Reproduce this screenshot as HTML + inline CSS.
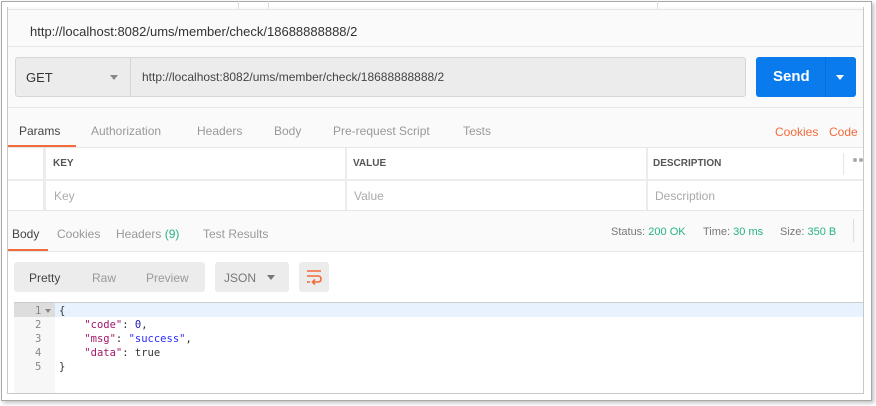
<!DOCTYPE html>
<html><head><meta charset="utf-8"><style>
*{margin:0;padding:0;box-sizing:border-box}
body{width:876px;height:406px;background:#fff;font-family:"Liberation Sans",sans-serif;position:relative;overflow:hidden}
.a{position:absolute}
.outer{left:1px;top:1px;width:871px;height:400px;border:1px solid #a8a8a8;box-shadow:2px 2px 4px rgba(0,0,0,.25);background:#fff}
.inner{left:7px;top:7px;width:857px;height:387px;border:1px solid #c8c8c8;border-top:none;background:#fafafa}
.t{font-size:13px;color:#333}
</style></head><body>
<div class="a outer"></div>
<div class="a inner"></div>
<div class="a" style="left:8px;top:1px;width:855px;height:9px;border-bottom:1px solid #e4e4e4"></div>
<div class="a" style="left:238px;top:1px;width:1px;height:9px;background:#ddd"></div>
<div class="a" style="left:268px;top:1px;width:1px;height:9px;background:#ddd"></div>
<div class="a" style="left:657px;top:1px;width:1px;height:9px;background:#ddd"></div>
<div class="a t" style="left:30px;top:24px;font-size:13px;color:#333">http://localhost:8082/ums/member/check/18688888888/2</div>
<div class="a" style="left:8px;top:46px;width:855px;height:1px;background:#e6e6e6"></div>
<div class="a" style="left:15px;top:57px;width:731px;height:40px;background:#ececec;border:1px solid #d6d6d6;border-radius:3px"></div>
<div class="a" style="left:130px;top:58px;width:1px;height:38px;background:#d6d6d6"></div>
<div class="a t" style="left:26px;top:70px">GET</div>
<div class="a" style="left:110px;top:75px;border:4px solid transparent;border-top:5px solid #888"></div>
<div class="a t" style="left:142px;top:70px;font-size:12px;color:#444">http://localhost:8082/ums/member/check/18688888888/2</div>
<div class="a" style="left:756px;top:57px;width:100px;height:40px;background:#097bed;border-radius:3px"></div>
<div class="a" style="left:825px;top:57px;width:1px;height:40px;background:#0a6fd4"></div>
<div class="a" style="left:773px;top:68px;color:#fff;font-weight:bold;font-size:15px">Send</div>
<div class="a" style="left:836px;top:75px;border:4px solid transparent;border-top:5px solid #fff"></div>
<div class="a" style="left:8px;top:107px;width:855px;height:1px;background:#e6e6e6"></div>
<div class="a t" style="left:19px;top:124px;font-size:12px;color:#444">Params</div>
<div class="a" style="left:91px;top:124px;font-size:12px;color:#999">Authorization</div>
<div class="a" style="left:197px;top:124px;font-size:12px;color:#999">Headers</div>
<div class="a" style="left:274px;top:124px;font-size:12px;color:#999">Body</div>
<div class="a" style="left:333px;top:124px;font-size:12px;color:#999">Pre-request Script</div>
<div class="a" style="left:463px;top:124px;font-size:12px;color:#999">Tests</div>
<div class="a" style="left:775px;top:125px;font-size:12px;color:#f26b3a">Cookies</div>
<div class="a" style="left:829px;top:125px;font-size:12px;color:#f26b3a">Code</div>
<div class="a" style="left:8px;top:145px;width:68px;height:2px;background:#f26b3a"></div>
<div class="a" style="left:8px;top:147px;width:855px;height:64px;background:#fff;border-top:1px solid #e6e6e6;border-bottom:1px solid #e6e6e6"></div>
<div class="a" style="left:8px;top:179px;width:855px;height:2px;background:#ececec"></div>
<div class="a" style="left:43px;top:148px;width:3px;height:62px;background:#ececec"></div>
<div class="a" style="left:345px;top:148px;width:2px;height:62px;background:#ececec"></div>
<div class="a" style="left:646px;top:148px;width:2px;height:62px;background:#ececec"></div>
<div class="a" style="left:843px;top:153px;width:1px;height:22px;background:#e6e6e6"></div>
<div class="a" style="left:53px;top:158px;font-size:10px;font-weight:bold;color:#555">KEY</div>
<div class="a" style="left:353px;top:158px;font-size:10px;font-weight:bold;color:#555">VALUE</div>
<div class="a" style="left:653px;top:158px;font-size:10px;font-weight:bold;color:#555">DESCRIPTION</div>
<div class="a" style="left:853px;top:158px;width:4px;height:4px;border-radius:2px;background:#aaa"></div>
<div class="a" style="left:859px;top:158px;width:4px;height:4px;border-radius:2px;background:#aaa"></div>
<div class="a" style="left:54px;top:189px;font-size:12px;color:#aaa">Key</div>
<div class="a" style="left:354px;top:189px;font-size:12px;color:#aaa">Value</div>
<div class="a" style="left:655px;top:189px;font-size:12px;color:#aaa">Description</div>
<div class="a" style="left:12px;top:227px;font-size:12px;color:#444">Body</div>
<div class="a" style="left:57px;top:227px;font-size:12px;color:#999">Cookies</div>
<div class="a" style="left:116px;top:227px;font-size:12px;color:#999">Headers <span style="color:#26b47f">(9)</span></div>
<div class="a" style="left:203px;top:227px;font-size:12px;color:#999">Test Results</div>
<div class="a" style="left:611px;top:226px;font-size:11px;color:#777">Status: <span style="color:#26b47f">200 OK</span></div>
<div class="a" style="left:703px;top:226px;font-size:11px;color:#777">Time: <span style="color:#26b47f">30 ms</span></div>
<div class="a" style="left:780px;top:226px;font-size:11px;color:#777">Size: <span style="color:#26b47f">350 B</span></div>
<div class="a" style="left:853px;top:219px;width:1px;height:23px;background:#ddd"></div>
<div class="a" style="left:8px;top:249px;width:40px;height:2px;background:#f26b3a"></div>
<div class="a" style="left:8px;top:251px;width:855px;height:142px;background:#fff;border-top:1px solid #e6e6e6"></div>
<div class="a" style="left:14px;top:262px;width:191px;height:30px;background:#ececec;border-radius:3px"></div>
<div class="a" style="left:29px;top:271px;font-size:12px;color:#444">Pretty</div>
<div class="a" style="left:92px;top:271px;font-size:12px;color:#999">Raw</div>
<div class="a" style="left:146px;top:271px;font-size:12px;color:#999">Preview</div>
<div class="a" style="left:215px;top:262px;width:74px;height:30px;background:#ececec;border-radius:3px"></div>
<div class="a" style="left:224px;top:271px;font-size:12px;color:#777">JSON</div>
<div class="a" style="left:267px;top:275px;border:4px solid transparent;border-top:5px solid #777"></div>
<div class="a" style="left:299px;top:262px;width:30px;height:30px;background:#ececec;border-radius:3px"></div>
<svg class="a" style="left:305px;top:268px" width="18" height="18" viewBox="0 0 18 18"><path d="M2 3H16M2 8H13Q16 8 16 11Q16 14 13 14H8M10 11.5L7.5 14L10 16.5M2 14H5" fill="none" stroke="#f26b3a" stroke-width="1.6"/></svg>
<div class="a" style="left:14px;top:302px;width:849px;height:1px;background:#ccc"></div>
<div class="a" style="left:14px;top:303px;width:41px;height:90px;background:#f7f7f7"></div>
<div class="a" style="left:14px;top:303px;width:41px;height:14px;background:#ddd"></div>
<div class="a" style="left:55px;top:303px;width:808px;height:14px;background:#e8f2fe"></div>
<pre class="a" style="left:35px;top:304px;font-family:'DejaVu Sans Mono',monospace;font-size:10.5px;line-height:14px;color:#888">1
2
3
4
5</pre>
<div class="a" style="left:45px;top:309px;border:3px solid transparent;border-top:4px solid #888"></div>
<pre class="a" style="left:59px;top:304px;font-family:'DejaVu Sans Mono',monospace;font-size:10.5px;line-height:14px;color:#333">{
    <span style="color:#a31569">"code"</span>: <span style="color:#1a1aa6">0</span>,
    <span style="color:#a31569">"msg"</span>: <span style="color:#2a2aff">"success"</span>,
    <span style="color:#a31569">"data"</span>: true
}</pre>
</body></html>
